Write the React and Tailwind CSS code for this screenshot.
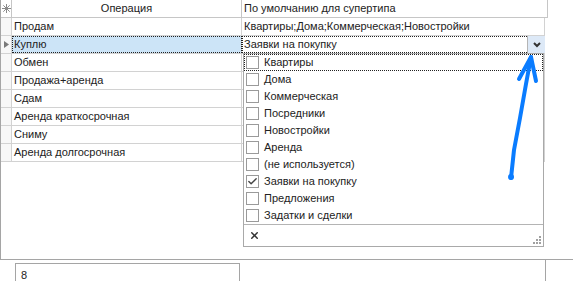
import { Check, X } from "lucide-react";

const rows = [
  { op: "Продам", def: "Квартиры;Дома;Коммерческая;Новостройки" },
  { op: "Куплю", def: "Заявки на покупку", current: true },
  { op: "Обмен", def: "" },
  { op: "Продажа+аренда", def: "" },
  { op: "Сдам", def: "" },
  { op: "Аренда краткосрочная", def: "" },
  { op: "Сниму", def: "" },
  { op: "Аренда долгосрочная", def: "" },
];

const items = [
  { label: "Квартиры", focus: true },
  { label: "Дома" },
  { label: "Коммерческая" },
  { label: "Посредники" },
  { label: "Новостройки" },
  { label: "Аренда" },
  { label: "(не используется)" },
  { label: "Заявки на покупку", checked: true },
  { label: "Предложения" },
  { label: "Задатки и сделки" },
];

const Star = () => (
  <svg width="9" height="9" viewBox="0 0 9 9" className="text-[#8a8a8a]">
    <g stroke="currentColor" strokeWidth="1">
      <line x1="4.5" y1="0" x2="4.5" y2="9" />
      <line x1="0" y1="4.5" x2="9" y2="4.5" />
      <line x1="1.3" y1="1.3" x2="7.7" y2="7.7" />
      <line x1="7.7" y1="1.3" x2="1.3" y2="7.7" />
    </g>
  </svg>
);

const DropList = () => (
  <div className="absolute left-[243px] top-[53px] w-[301px] h-[194px] bg-white border border-[#a9a9a9] flex flex-col">
    <div className="flex flex-col">
      {items.map((it) => (
        <div
          key={it.label}
          className={`h-[17px] flex items-center gap-[5px] pl-[2px] ${
            it.focus ? "outline outline-1 outline-dotted outline-[#222] -outline-offset-1" : ""
          }`}
        >
          <div className="w-[13px] h-[13px] border border-[#9a9a9a] bg-white flex items-center justify-center">
            {it.checked && <Check size={11} strokeWidth={3} className="text-[#444]" />}
          </div>
          <span>{it.label}</span>
        </div>
      ))}
    </div>
    <div className="mt-auto h-[23px] border-t border-[#b4b4b4] flex items-center justify-between px-[5px] relative">
      <X size={11} strokeWidth={3.2} className="text-[#333]" />
      <svg width="8" height="8" viewBox="0 0 8 8" className="absolute right-[2px] bottom-[2px]">
        <g fill="#a0a0a0">
          <rect x="6" y="0" width="2" height="2" />
          <rect x="3" y="3" width="2" height="2" />
          <rect x="6" y="3" width="2" height="2" />
          <rect x="0" y="6" width="2" height="2" />
          <rect x="3" y="6" width="2" height="2" />
          <rect x="6" y="6" width="2" height="2" />
        </g>
      </svg>
    </div>
  </div>
);

const App = () => {
  return (
    <div
      className="relative w-[573px] h-[281px] bg-white text-[11px] text-[#222] overflow-hidden"
      style={{ fontFamily: '"Liberation Sans", Arial, sans-serif' }}
    >
      <div className="h-[260px] border-l border-b border-[#a5a5a5]">
        <div className="flex h-[18px] border-b border-[#c6c6c6] w-[547px]">
          <div className="w-[11px] border-r border-[#c6c6c6] flex items-center justify-center">
            <Star />
          </div>
          <div className="w-[230px] border-r border-[#c6c6c6] flex items-center justify-center">
            Операция
          </div>
          <div className="flex-1 border-r border-[#c6c6c6] flex items-center pl-[2px]">
            По умолчанию для супертипа
          </div>
        </div>
        {rows.map((r) => (
          <div key={r.op} className="flex h-[18px] border-b border-[#d2d2d2] w-[544px]">
            <div className="w-[11px] border-r border-[#d2d2d2] bg-[#f7f7f7] flex items-center justify-center">
              {r.current && (
                <svg width="5" height="7" viewBox="0 0 5 7">
                  <polygon points="0,0 5,3.5 0,7" fill="#7a7a7a" />
                </svg>
              )}
            </div>
            <div
              className={`w-[230px] border-r border-[#d2d2d2] flex items-center pl-[2px] ${
                r.current ? "bg-[#cce4f7] outline outline-1 outline-dotted outline-[#222] -outline-offset-1" : ""
              }`}
            >
              {r.op}
            </div>
            {r.current ? (
              <div className="flex-1 flex items-center pl-[2px] relative outline outline-1 outline-dotted outline-[#222] -outline-offset-1">
                <span>{r.def}</span>
                <div className="absolute right-0 top-0 w-[18px] h-[17px] border-l border-[#b5b5b5] bg-[#dde9f7] flex items-center justify-center">
                  <svg width="8" height="6" viewBox="0 0 8 6">
                    <polyline points="1,1 4,4 7,1" fill="none" stroke="#333" strokeWidth="2" />
                  </svg>
                </div>
              </div>
            ) : (
              <div className="flex-1 border-r border-[#d2d2d2] flex items-center pl-[2px]">{r.def}</div>
            )}
          </div>
        ))}
      </div>
      <div className="flex pl-[15px] pt-[3px] border-r border-[#a5a5a5] w-[546px] h-[21px]">
        <div className="w-[225px] h-[30px] border border-[#a5a5a5] pl-[5px] pt-[5px] leading-[12px]">8</div>
      </div>

      <DropList />

      <svg className="absolute left-0 top-0 pointer-events-none" width="573" height="281">
        <g stroke="#0a7cff" strokeWidth="4" strokeLinecap="round" strokeLinejoin="round" fill="none">
          <path d="M511 178 L514 150 L520 118 L526 84 L531 57" />
          <path d="M519 79 L531 57 L536 81" />
        </g>
        <circle cx="511" cy="177" r="3" fill="#0a7cff" />
      </svg>
    </div>
  );
};

export default App;
